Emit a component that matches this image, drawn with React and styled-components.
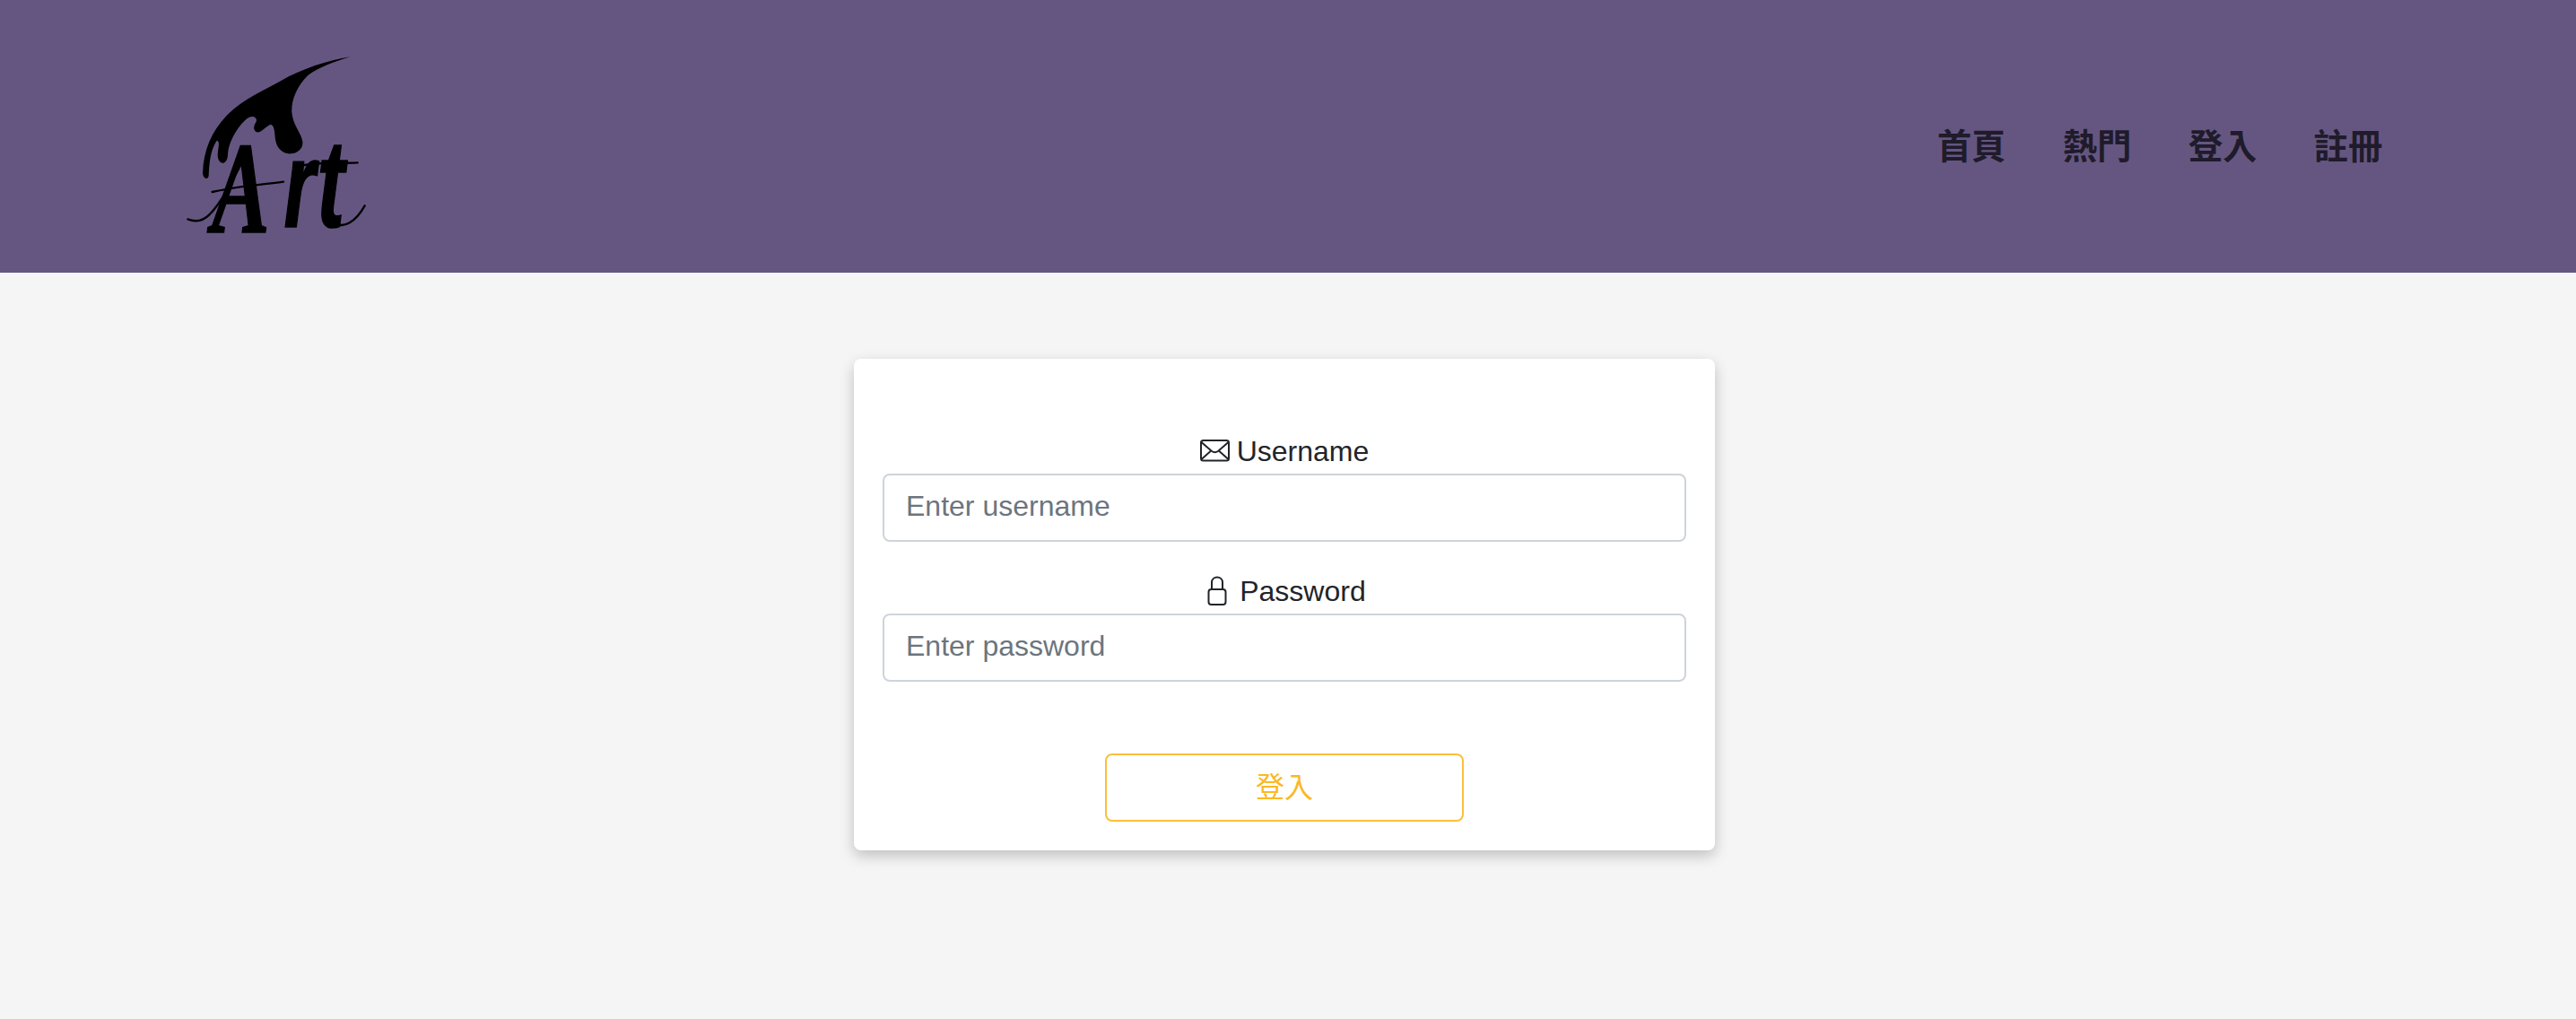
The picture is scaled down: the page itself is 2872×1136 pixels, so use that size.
import React from "react";
import styled, { createGlobalStyle } from "styled-components";

const GlobalStyle = createGlobalStyle`
  * {
    box-sizing: border-box;
  }
  html, body {
    margin: 0;
    padding: 0;
  }
  body {
    background-color: #f5f5f5;
    color: #212529;
    font-family: "Liberation Sans", "Noto Sans CJK TC", sans-serif;
    min-height: 1136px;
  }
`;

function Logo() {
  return (
    <LogoSvg viewBox="0 -24 780 720" role="img" aria-label="Art">
      <path d="M632 70 C556 82 470 110 400 150 C340 184 270 212 215 270 C170 318 140 380 138 460 C140 478 154 484 158 468 C160 430 162 385 185 350 C198 352 188 380 188 400 C190 432 218 436 222 400 C222 360 250 310 280 282 C296 266 318 266 318 284 C312 296 302 312 318 322 C335 326 350 300 366 296 C380 300 378 330 382 352 C388 382 412 396 432 394 C458 392 474 376 472 354 C468 325 440 300 436 256 C434 215 452 170 490 132 C524 106 580 86 632 70 Z" />
      <LogoWord transform="translate(168 656) scale(0.66 1)">
        <tspan fontSize="440">A</tspan>
        <LogoTail fontSize="410" dx="73" dy="-16">r</LogoTail>
        <LogoTail fontSize="420" dx="8">t</LogoTail>
      </LogoWord>
      <LogoSwash d="M88 613 C110 622 136 622 160 598 C200 560 240 480 296 372" />
      <LogoSwash d="M170 522 C240 505 320 500 408 488" />
      <LogoSwash d="M460 436 C520 420 590 428 656 424" />
      <LogoSwash d="M575 622 C610 650 650 620 680 568" />
    </LogoSvg>
  );
}

function MailIcon() {
  return (
    <FieldIcon viewBox="0 0 32 32">
      <rect x="1" y="5" width="31" height="22.5" rx="2.5" />
      <path d="M1.5 7 L13 17 Q16.5 19.5 20 17 L31.5 7 M1.5 26 L12.5 16.2 M31.5 26 L20.5 16.2" />
    </FieldIcon>
  );
}

function LockIcon() {
  return (
    <FieldIcon viewBox="0 0 32 32">
      <rect x="6.5" y="15" width="19" height="17" rx="3" />
      <path d="M10 15 V7.5 C10 -0.5 22 -0.5 22 7.5 V15" />
    </FieldIcon>
  );
}

export default function App() {
  return (
    <>
      <GlobalStyle />
      <Header>
        <Logo />
        <Nav>
          <NavLink href="#">首頁</NavLink>
          <NavLink href="#">熱門</NavLink>
          <NavLink href="#">登入</NavLink>
          <NavLink href="#">註冊</NavLink>
        </Nav>
      </Header>
      <Main>
        <Card>
          <Field>
            <Label htmlFor="username">
              <MailIcon /> Username
            </Label>
            <Input id="username" type="text" placeholder="Enter username" />
          </Field>
          <Field>
            <Label htmlFor="password">
              <LockIcon /> Password
            </Label>
            <Input id="password" type="password" placeholder="Enter password" />
          </Field>
          <SubmitButton type="button">登入</SubmitButton>
        </Card>
      </Main>
    </>
  );
}

const Header = styled.header`
  height: 304px;
  background-color: #655681;
  padding: 0 184px 0 180px;
  display: flex;
  align-items: center;
  justify-content: space-between;
`;
const LogoSvg = styled.svg`
  display: block;
  width: 260px;
  height: 240px;
  overflow: visible;
  fill: #000;
`;
const LogoWord = styled.text`
  font-family: "Liberation Serif", serif;
  font-style: italic;
  font-weight: 700;
  fill: #000;
  stroke: #000;
  stroke-width: 5;
`;
const LogoTail = styled.tspan`
  font-family: "Liberation Sans", sans-serif;
`;
const LogoSwash = styled.path`
  fill: none;
  stroke: #000;
  stroke-width: 7;
  stroke-linecap: round;
`;
const Nav = styled.nav`
  display: flex;
  padding-top: 18px;
`;
const NavLink = styled.a`
  padding: 0 31.6px;
  color: #1f1b2b;
  font-family: "Noto Sans CJK TC", "Liberation Sans", sans-serif;
  font-size: 38.4px;
  font-weight: 700;
  line-height: 1.5;
  text-decoration: none;
`;
const Main = styled.main`
  display: flex;
  justify-content: center;
  padding: 96px 8px 0 0;
`;
const Card = styled.form`
  width: 960px;
  padding: 80px 32px 32px;
  background-color: #fff;
  border-radius: 8px;
  box-shadow: 0 6px 16px rgba(0, 0, 0, 0.22);
  display: flex;
  flex-direction: column;
  align-items: center;
`;
const Field = styled.div`
  width: 100%;
  margin-bottom: 32px;
  text-align: center;
`;
const Label = styled.label`
  display: block;
  height: 48px;
  font-size: 32px;
  line-height: 46px;
  color: #212529;
`;
const FieldIcon = styled.svg`
  display: inline-block;
  width: 32px;
  height: 32px;
  vertical-align: -4px;
  overflow: visible;
  fill: none;
  stroke: #212529;
  stroke-width: 2;
`;
const Input = styled.input`
  display: block;
  width: 100%;
  height: 76px;
  padding: 10px 24px 14px;
  border: 2px solid #ced4da;
  border-radius: 8px;
  background-color: #fff;
  color: #495057;
  font-family: inherit;
  font-size: 32px;
  outline: none;

  &::placeholder {
    color: #6c757d;
    opacity: 1;
  }
`;
const SubmitButton = styled.button`
  width: 400px;
  height: 76px;
  margin-top: 48px;
  padding: 0 0 6px;
  border: 2px solid #fdbf3a;
  border-radius: 8px;
  background-color: transparent;
  color: #fbb824;
  font-family: "Liberation Sans", "Noto Sans CJK TC", sans-serif;
  font-size: 32px;
`;
